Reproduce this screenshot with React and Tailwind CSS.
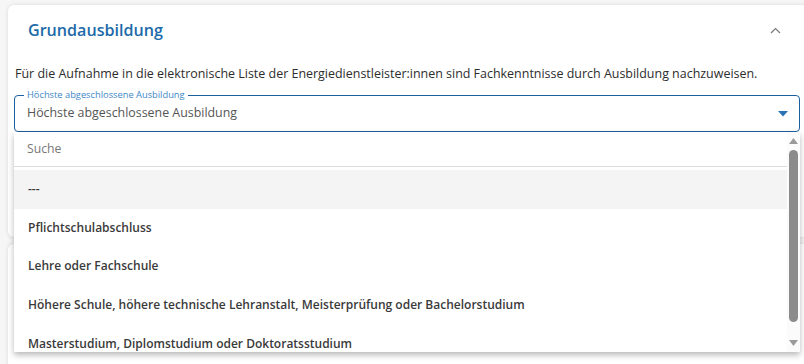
import React, { useState } from 'react';

const options = [
    '---',
    'Pflichtschulabschluss',
    'Lehre oder Fachschule',
    'Höhere Schule, höhere technische Lehranstalt, Meisterprüfung oder Bachelorstudium',
    'Masterstudium, Diplomstudium oder Doktoratsstudium',
];

const ChevronUp = () => (
    <svg width="11" height="7" viewBox="0 0 11 7" fill="none">
        <path d="M1 6 L5.5 1.5 L10 6" stroke="#7a7a7a" strokeWidth="1.2" />
    </svg>
);

const CaretDown = () => (
    <svg width="10" height="6" viewBox="0 0 10 6">
        <path d="M0 0 H10 L5 5.5 Z" fill="#2a72b3" />
    </svg>
);

const ScrollBar = () => (
    <div className="flex flex-col items-center w-[13px] h-full bg-[#fbfbfb] pt-[6px] pb-[6px]">
        <svg width="9" height="6" viewBox="0 0 9 6">
            <path d="M0 6 L4.5 0 L9 6 Z" fill="#9a9a9a" />
        </svg>
        <div className="w-[9px] h-[172px] mt-[6px] rounded-full bg-[#8b8b8b]" />
        <div className="flex-1" />
        <svg width="9" height="6" viewBox="0 0 9 6">
            <path d="M0 0 H9 L4.5 6 Z" fill="#9a9a9a" />
        </svg>
    </div>
);

const App = () => {
    const [selected] = useState(0); // hovered row

    return (
        <div
            className="relative w-[804px] h-[364px] overflow-hidden bg-[#f6f6f6] pl-[8px] pt-[5px]"
            style={{ fontFamily: '"Open Sans", "Noto Sans", sans-serif' }}
        >
            {/* card: Grundausbildung */}
            <div className="w-[800px] h-[232px] bg-white rounded-md shadow-[0_0_4px_rgba(0,0,0,0.12)]">
                <div className="flex items-center justify-between h-[50px] pl-[20px] pr-[27px] pt-[1px]">
                    <h2 className="text-[16.1px] font-semibold text-[#1c6aa9]">Grundausbildung</h2>
                    <ChevronUp />
                </div>

                <p className="mt-[10px] pl-[7px] text-[12.46px] leading-[18px] text-[#2d2d2d]">
                    Für die Aufnahme in die elektronische Liste der Energiedienstleister:innen sind Fachkenntnisse durch Ausbildung nachzuweisen.
                </p>

                {/* outlined select */}
                <div className="relative mt-[12px] ml-[6px] w-[786px] h-[37px] rounded-[4px] border border-[#1c5f9e] flex items-center justify-between pl-[12px] pr-[11px]">
                    <span className="absolute left-[9px] top-[-8px] bg-white px-[3px] text-[9.3px] leading-[14px] text-[#3d88c7]">
                        Höchste abgeschlossene Ausbildung
                    </span>
                    <span className="text-[12.4px] text-[#555555]">Höchste abgeschlossene Ausbildung</span>
                    <CaretDown />
                </div>
            </div>

            {/* next card, mostly hidden */}
            <div className="mt-[7px] w-[800px] h-[140px] bg-white rounded-md shadow-[0_0_4px_rgba(0,0,0,0.12)]" />

            {/* open dropdown */}
            <div className="absolute left-[14px] top-[132px] w-[786px] h-[220px] bg-white flex shadow-[0_3px_6px_rgba(0,0,0,0.28)]">
                <div className="flex-1 flex flex-col overflow-hidden">
                    <div className="h-[35px] flex items-center pl-[13px] border-b border-[#dcdcdc] shrink-0">
                        <span className="text-[12.2px] text-[#777777]">Suche</span>
                    </div>
                    <div className="pt-[3px] flex flex-col">
                        {options.map((opt, i) => (
                            <div
                                key={opt}
                                className={`h-[38.6px] shrink-0 flex items-center pl-[14px] text-[12px] font-semibold text-[#3a3a3a] ${
                                    i === selected ? 'bg-[#f4f4f4]' : 'bg-white'
                                }`}
                            >
                                {opt}
                            </div>
                        ))}
                    </div>
                </div>
                <ScrollBar />
            </div>
        </div>
    );
};

export default App;
